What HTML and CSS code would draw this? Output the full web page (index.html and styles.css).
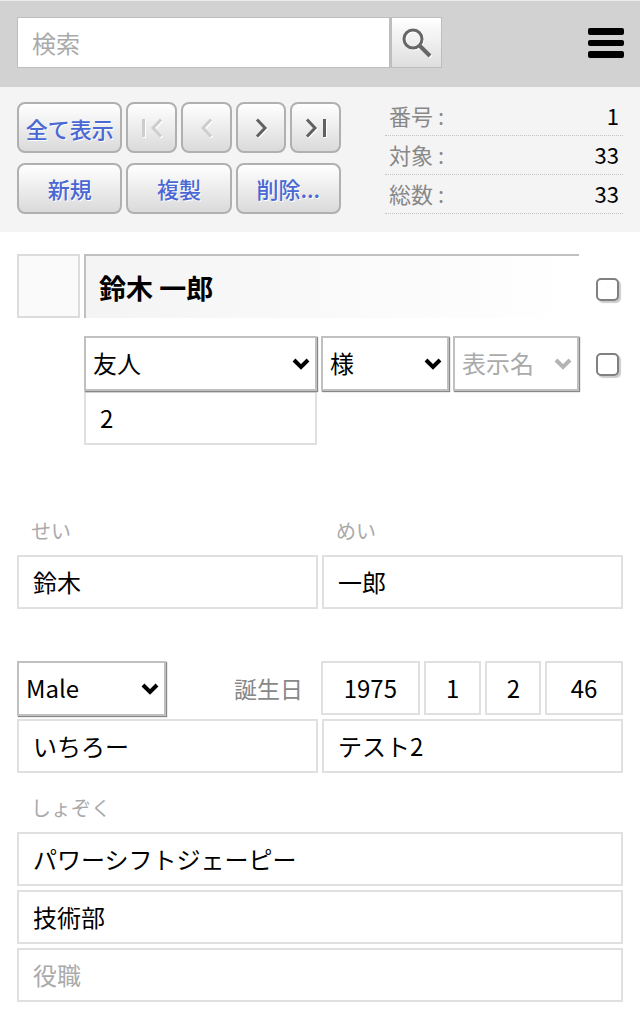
FILE: index.html
```html
<!DOCTYPE html>
<html lang="ja">
<head>
<meta charset="utf-8">
<meta name="viewport" content="width=device-width, initial-scale=1">
<title>連絡先</title>
<link rel="stylesheet" href="styles.css">
</head>
<body>
<header class="topbar">
  <form class="search" role="search">
    <input class="search-input" type="search" placeholder="検索" aria-label="検索">
    <button class="search-button" type="button" aria-label="検索する">
      <svg class="icon" width="30" height="30" viewBox="0 0 30 30"><g fill="none" stroke="#fff" transform="translate(1 1)"><circle cx="11" cy="11" r="9" stroke-width="3"/><path d="M18 18l10 10" stroke-width="4"/></g><g fill="none" stroke="#666"><circle cx="11" cy="11" r="9" stroke-width="3"/><path d="M18 18l10 10" stroke-width="4"/></g></svg>
    </button>
  </form>
  <button class="menu-button" type="button" aria-label="メニュー">
    <svg class="icon" width="36" height="30" viewBox="0 0 36 30"><rect width="36" height="7" rx="2"/><rect y="12" width="36" height="6" rx="2"/><rect y="23" width="36" height="7" rx="2"/></svg>
  </button>
</header>

<section class="toolbar">
  <div class="actions">
    <button class="btn wide" type="button">全て表示</button>
    <button class="btn" type="button" aria-label="最初" disabled><svg class="icon nav" width="22" height="20" viewBox="0 0 22 20"><path d="M2.500 1v18M20 1.500L12 10l8 8.500"/></svg></button>
    <button class="btn" type="button" aria-label="前へ" disabled><svg class="icon nav" width="22" height="20" viewBox="0 0 22 20"><path d="M16 1.500L8 10l8 8.500"/></svg></button>
    <button class="btn" type="button" aria-label="次へ"><svg class="icon nav" width="22" height="20" viewBox="0 0 22 20"><path d="M7 1.500L15 10l-8 8.500"/></svg></button>
    <button class="btn" type="button" aria-label="最後"><svg class="icon nav" width="22" height="20" viewBox="0 0 22 20"><path d="M2 1.500L10 10l-8 8.500M19.500 1v18"/></svg></button>
    <button class="btn wide" type="button">新規</button>
    <button class="btn wide" type="button">複製</button>
    <button class="btn wide" type="button">削除...</button>
  </div>
  <dl class="summary">
    <div class="summary-row"><dt>番号 :</dt><dd>1</dd></div>
    <div class="summary-row"><dt>対象 :</dt><dd>33</dd></div>
    <div class="summary-row"><dt>総数 :</dt><dd>33</dd></div>
  </dl>
</section>

<main class="record">
  <div class="identity">
    <div class="photo"></div>
    <h1 class="name">鈴木 一郎</h1>
    <input class="check" type="checkbox" aria-label="氏名を選択">
  </div>
  <div class="identity kinds">
    <div class="kind-fields">
      <span class="select"><select aria-label="分類"><option>友人</option></select><svg class="arrow" width="18" height="12" viewBox="0 0 18 12"><path d="M2 2l7 7 7-7"/></svg></span>
      <span class="select"><select aria-label="敬称"><option>様</option></select><svg class="arrow" width="18" height="12" viewBox="0 0 18 12"><path d="M2 2l7 7 7-7"/></svg></span>
      <span class="select muted"><select aria-label="表示名"><option>表示名</option></select><svg class="arrow" width="18" height="12" viewBox="0 0 18 12"><path d="M2 2l7 7 7-7"/></svg></span>
      <input class="field" type="text" value="2" aria-label="分類番号">
    </div>
    <input class="check" type="checkbox" aria-label="表示名を選択">
  </div>

  <div class="pair names">
    <label class="caption" for="sei">せい</label>
    <label class="caption" for="mei">めい</label>
    <input class="field" id="sei" type="text" value="鈴木">
    <input class="field" id="mei" type="text" value="一郎">
  </div>

  <div class="birth">
    <span class="select"><select aria-label="性別"><option>Male</option></select><svg class="arrow" width="18" height="12" viewBox="0 0 18 12"><path d="M2 2l7 7 7-7"/></svg></span>
    <label class="birth-label" for="year">誕生日</label>
    <div class="dates">
      <input class="field" id="year" type="text" value="1975">
      <input class="field" type="text" value="1" aria-label="月">
      <input class="field" type="text" value="2" aria-label="日">
      <input class="field" type="text" value="46" aria-label="年齢">
    </div>
  </div>
  <div class="pair">
    <input class="field" type="text" value="いちろー" aria-label="ニックネーム">
    <input class="field" type="text" value="テスト2" aria-label="備考">
  </div>

  <div class="company">
    <label class="caption" for="company">しょぞく</label>
    <input class="field" id="company" type="text" value="パワーシフトジェーピー">
    <input class="field" type="text" value="技術部" aria-label="部署">
    <input class="field" type="text" placeholder="役職" aria-label="役職">
  </div>
</main>
</body>
</html>
```

FILE: styles.css
```css
* {
  box-sizing: border-box;
}

body {
  margin: 0;
  background: #fff;
  color: #000;
  font: 24px/32px "Noto Sans CJK JP", "Noto Sans", sans-serif;
}

button,
input,
select {
  margin: 0;
  font: inherit;
  color: inherit;
  border-radius: 0;
  min-width: 0;
}

.icon {
  display: block;
}

.topbar {
  display: flex;
  align-items: center;
  justify-content: space-between;
  padding: 16px 16px 19px 17px;
  border-top: 1px solid #ececec;
  background: #d2d2d2;
}

.search {
  display: flex;
  flex: 0 1 425px;
  min-width: 0;
}

.search-input {
  flex: 1;
  height: 51px;
  padding: 0 14px;
  border: 1px solid #bebebe;
  border-right-width: 2px;
  background: #fff;
  appearance: none;
  outline: 0;
}

::placeholder {
  color: #aaa;
  opacity: 1;
}

.search-button {
  display: grid;
  place-items: center;
  width: 51px;
  padding: 0;
  border: 1px solid #bebebe;
  background: linear-gradient(#fff, #dedede);
}

.menu-button {
  padding: 0;
  border: 0;
  background: none;
}

.toolbar {
  display: flex;
  justify-content: space-between;
  gap: 44px;
  padding: 10px 17px 18px;
  background: #f4f4f4;
}

.actions {
  display: grid;
  grid-template-columns: repeat(6, 1fr);
  gap: 9px 4px;
  flex: 324 1 0;
  padding-top: 5px;
}

.btn {
  display: grid;
  place-items: center;
  height: 51px;
  padding: 0;
  border: 2px solid #b0b0b0;
  border-radius: 8px;
  background: linear-gradient(#fff, #dadada);
  color: #4a68d4;
  font-size: 22px;
  font-weight: 500;
  text-shadow: 1px 1px 0 #fff;
  white-space: nowrap;
}

.wide {
  grid-column: span 2;
}

.nav {
  fill: none;
  stroke: #606060;
  stroke-width: 3;
  filter: drop-shadow(1px 1px 0 #fff);
}

.btn:disabled .nav {
  stroke: #cdcdcd;
}

.summary {
  flex: 238 1 0;
  margin: 0;
  font-size: 22px;
}

.summary-row {
  display: flex;
  justify-content: space-between;
  height: 39px;
  padding: 2px 4px;
  border-bottom: 1px dotted #c4c4c4;
}

.summary dt {
  color: #888;
}

.summary dd {
  margin: 0;
}

.record {
  padding: 22px 17px;
}

.identity {
  display: grid;
  grid-template-columns: 63px minmax(0, 1fr) 40px;
  column-gap: 4px;
}

.identity > .check {
  justify-self: end;
}

.photo {
  height: 64px;
  border: 2px solid #dcdcdc;
  background: #fafafa;
}

.name {
  margin: 0;
  padding: 16px 13px 14px;
  border-top: 2px solid #c0c0c0;
  border-left: 2px solid #c0c0c0;
  background: linear-gradient(90deg, #f4f4f4, #fff);
  font-size: 27px;
  line-height: 32px;
}

.check {
  align-self: start;
  width: 23px;
  height: 23px;
  margin: 24px 4px 0 0;
  border: 2px solid #808080;
  border-radius: 5px;
  background: #fff;
  box-shadow: 2px 2px 1px #ccc;
  appearance: none;
}

.check:checked {
  background: #4a68d4;
}

.kinds {
  margin-top: 18px;
}

.kind-fields {
  grid-column: 2;
  display: grid;
  grid-template-columns: 233fr 128fr 126fr;
  column-gap: 4px;
}

.kinds > .check {
  margin-top: 17px;
}

.select {
  position: relative;
  display: block;
}

.select select {
  display: block;
  width: 100%;
  height: 55px;
  padding: 0 30px 2px 7px;
  border: 2px solid #c0c0c0;
  background: #fff;
  box-shadow: 1px 1px 1px #888;
  appearance: none;
}

.arrow {
  position: absolute;
  top: 22px;
  right: 7px;
  fill: none;
  stroke: #000;
  stroke-width: 4;
  pointer-events: none;
}

.muted {
  color: #aaa;
}

.muted .arrow {
  stroke: #b4b4b4;
}

.field {
  display: block;
  width: 100%;
  height: 54px;
  padding: 0 14px 2px;
  border: 2px solid #e0e0e0;
  background: #fff;
}

.caption {
  padding: 0 14px;
  color: #aaa;
  font-size: 20px;
}

.pair {
  display: grid;
  grid-template-columns: 1fr 1fr;
  column-gap: 4px;
}

.names {
  margin-top: 70px;
  row-gap: 8px;
}

.birth {
  display: grid;
  grid-template-columns: 149fr 155fr 302fr;
  align-items: start;
  margin: 52px 0 3px;
}

.birth-label {
  padding: 11px 18px 0 0;
  color: #888;
  font-size: 23px;
  text-align: right;
}

.dates {
  display: grid;
  grid-template-columns: 99fr 58fr 56fr 78fr;
  column-gap: 4px;
}

.dates .field {
  padding: 0 0 2px;
  text-align: center;
}

.company {
  display: grid;
  row-gap: 4px;
  margin-top: 19px;
}

.company .caption {
  padding-bottom: 4px;
}
```
